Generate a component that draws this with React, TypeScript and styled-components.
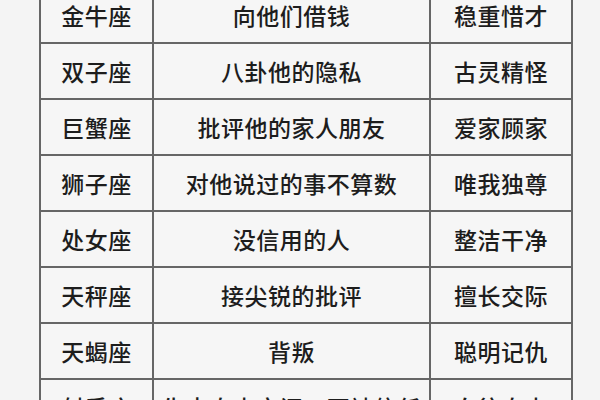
import React from "react";
import styled, { createGlobalStyle } from "styled-components";

const GlobalStyle = createGlobalStyle`
  html, body {
    margin: 0;
    padding: 0;
    background: #f4f4f4;
    overflow: hidden;
  }
`;

const Page = styled.div`
  width: 600px;
  height: 400px;
  padding-left: 39px;
  box-sizing: border-box;
  overflow: hidden;
`;

const Table = styled.table`
  border-collapse: collapse;
  margin-top: -14px;
  background: #f6f6f6;
  font-family: "Noto Sans CJK SC", "Noto Sans", sans-serif;
  font-weight: 500;
  font-size: 23px;
  color: #1d1d1d;
`;

const Row = styled.tr`
  height: 56px;
`;

const Cell = styled.td<{ w: number }>`
  width: ${(p) => p.w}px;
  border: 2px solid #666;
  padding: 0;
  text-align: center;
  vertical-align: middle;
  line-height: 1;
  letter-spacing: 0.5px;
`;

const rows: [string, string, string][] = [
  ["金牛座", "向他们借钱", "稳重惜才"],
  ["双子座", "八卦他的隐私", "古灵精怪"],
  ["巨蟹座", "批评他的家人朋友", "爱家顾家"],
  ["狮子座", "对他说过的事不算数", "唯我独尊"],
  ["处女座", "没信用的人", "整洁干净"],
  ["天秤座", "接尖锐的批评", "擅长交际"],
  ["天蝎座", "背叛", "聪明记仇"],
  ["射手座", "失去自由空间，不被信任", "向往自由"],
];

export default function App() {
  return (
    <Page>
      <GlobalStyle />
      <Table>
        <tbody>
          {rows.map(([sign, fear, trait]) => (
            <Row key={sign}>
              <Cell w={111}>{sign}</Cell>
              <Cell w={275}>{fear}</Cell>
              <Cell w={140}>{trait}</Cell>
            </Row>
          ))}
        </tbody>
      </Table>
    </Page>
  );
}
